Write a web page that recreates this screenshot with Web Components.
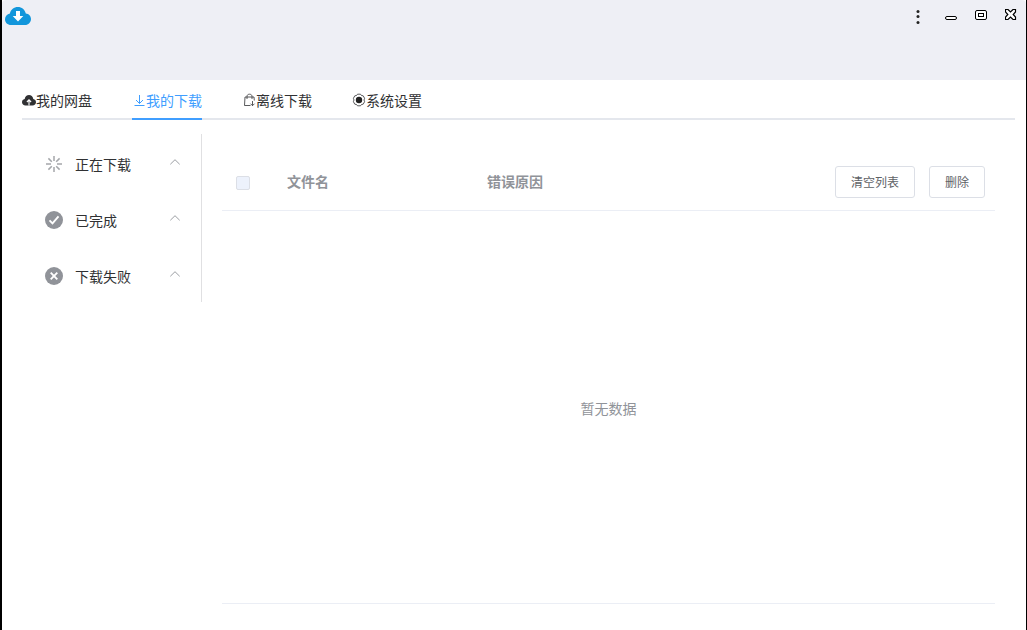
<!DOCTYPE html>
<html lang="zh-CN">
<head>
<meta charset="utf-8">
<title>我的下载</title>
<style>
html,body{margin:0;background:#000}
body{font:14px/20px "Noto Sans CJK SC",sans-serif;color:#303133}
</style>
</head>
<body>
<app-window></app-window>
<script>
const icons = {
  logo:'<svg viewBox="0 0 26 20"><path fill="#1296db" d="M6.200 19C2.500 19 0 16.500 0 13.200c0-3 2.100-5.300 4.900-5.800C5.800 3.500 9 1 12.800 1c4 0 7.200 2.700 8 6.500C23.800 7.800 26 10 26 13c0 3.300-2.600 6-6 6z"/><path fill="#fff" d="M11 5h4v5h3.300L13 15.600 7.700 10H11z"/></svg>',
  dots:'<svg viewBox="0 0 12 16"><g fill="#222"><circle cx="6" cy="2.500" r="1.500"/><circle cx="6" cy="7.500" r="1.500"/><circle cx="6" cy="13.500" r="1.500"/></g></svg>',
  min:'<svg viewBox="0 0 12 12"><rect x=".5" y="7.500" width="11" height="3" rx="1.500" fill="#fff" stroke="#000"/></svg>',
  max:'<svg viewBox="0 0 12 12"><g fill="#fff" stroke="#000"><rect x=".5" y="1.500" width="11" height="9" rx="1.500"/><rect x="3.500" y="4.500" width="5" height="3"/></g></svg>',
  close:'<svg viewBox="0 0 12 12"><path d="M.5.500h2.500L5.500 3 8 .5h2.500V3L8.200 5.500l2.300 2.500v2.500H8L5.500 8 3 10.500H.5V8l2.300-2.500L.5 3z" fill="#fff" stroke="#000" stroke-width="1.200"/></svg>',
  cloud:'<svg viewBox="0 0 14 14"><path fill="#303133" d="M3.500 12.500C1.500 12.500 0 11 0 9.200c0-1.600 1.100-2.900 2.700-3.200C3.100 3.500 4.800 2 7 2s3.900 1.500 4.300 4C12.900 6.300 14 7.600 14 9.200c0 1.800-1.500 3.300-3.500 3.300z"/><path d="M7 12.500V7M4.900 9 7 6.800 9.100 9" fill="none" stroke="#fff" stroke-width="1.100"/></svg>',
  down:'<svg viewBox="0 0 14 14"><path d="M7.500 2v8.500M4 7l3.500 3.500L11 7M2.500 12.500h10" fill="none" stroke="currentColor"/></svg>',
  bag:'<svg viewBox="0 0 14 14"><path d="M8.500 12.500h-6l.5-8.500h9l.3 3.500M5 6V3.500C5 2 6 1.200 7.500 1.200S10 2 10 3.500V6M10.500 8v4.500M8.500 10.700l2 2 2-2" fill="none" stroke="currentColor" stroke-width=".8"/></svg>',
  gear:'<svg viewBox="0 0 14 14"><path d="M5.500 1.200h3l1 1.300 1.700.3 1.400 2.500-.6 1.700.6 1.700-1.400 2.500-1.700.3-1 1.300h-3l-1-1.300-1.700-.3-1.400-2.500L2 7l-.6-1.700 1.400-2.500 1.700-.3z" fill="none" stroke="currentColor" stroke-width=".8"/><circle cx="7" cy="7" r="3.200" fill="#222"/></svg>',
  loading:'<svg viewBox="0 0 18 18"><path d="M9 1v5M9 12v5M1 9h5M12 9h5M3.400 3.400l3.400 3.400M11.200 11.200l3.400 3.400M14.600 3.400l-3.400 3.400M6.800 11.200l-3.400 3.400" stroke="#a5a7ab" stroke-width="1.500"/></svg>',
  done:'<svg viewBox="0 0 18 18"><circle cx="9" cy="9" r="9" fill="#909399"/><path d="m4.500 9.300 3 3 6-7" fill="none" stroke="#fff" stroke-width="1.900"/></svg>',
  failed:'<svg viewBox="0 0 18 18"><circle cx="9" cy="9" r="9" fill="#909399"/><path d="m5.700 5.700 6.600 6.600m0-6.600-6.600 6.600" stroke="#fff" stroke-width="1.900"/></svg>',
  up:'<svg viewBox="0 0 12 12"><path d="m1.300 8.300 4.700-4.600 4.700 4.600" fill="none" stroke="#909399" stroke-width=".9"/></svg>'
};
const define = (name, html, ready) => customElements.define(name, class extends HTMLElement {
  connectedCallback(){
    if (this.shadowRoot) return;
    const root = this.attachShadow({mode:'open'});
    root.innerHTML = '<style>*{box-sizing:border-box}button{font:inherit;color:inherit;background:none;border:0;padding:0;margin:0;cursor:pointer}</style>' + html;
    if (ready) ready(this, root);
  }
});

define('app-icon', '<style>:host{display:block;width:14px;height:14px;flex:none}svg{display:block;width:100%;height:100%}</style><span></span>',
  (el, root) => { root.querySelector('span').innerHTML = icons[el.getAttribute('name')]; root.querySelector('svg').setAttribute('aria-hidden','true'); });

define('title-bar', `<style>
:host{display:block;height:80px;background:#eeeff5;border-radius:4px 4px 0 0}
header{display:flex;justify-content:space-between;padding:6px 9px 0 3px}
.logo{width:26px;height:20px}
nav{display:flex;gap:18px;padding-top:3px}
nav app-icon{width:12px;height:12px}
button{display:block;height:12px}
.more{margin-right:3px}
.more app-icon{height:16px}
</style><header><app-icon class="logo" name="logo"></app-icon><nav aria-label="窗口">
<button class="more" aria-label="更多"><app-icon name="dots"></app-icon></button>
<button aria-label="最小化"><app-icon name="min"></app-icon></button>
<button aria-label="最大化"><app-icon name="max"></app-icon></button>
<button aria-label="关闭"><app-icon name="close"></app-icon></button></nav></header>`);

define('tab-item', `<style>
:host{display:block}
button{display:flex;align-items:center;height:40px;padding-top:2px;border-bottom:2px solid transparent;white-space:nowrap}
:host([active]) button{color:#409eff;border-color:#409eff}
</style><button role="tab"></button>`,
  (el, root) => {
    const button = root.querySelector('button');
    button.innerHTML = `<app-icon name="${el.getAttribute('icon')}"></app-icon><slot></slot>`;
    button.setAttribute('aria-selected', el.hasAttribute('active'));
  });

define('tab-bar', `<style>
:host{display:block;margin:0 11px 0 20px}
div{display:flex;gap:40px;box-shadow:inset 0 -2px #e4e7ed}
</style><div role="tablist"><slot></slot></div>`);

define('side-item', `<style>
:host{display:block}
button{display:flex;align-items:center;width:100%;height:56px;padding:4px 20px 0 23px;text-align:left}
.kind{width:18px;height:18px;margin:0 12px 0 0}
.text{flex:1}
.arrow{width:12px;height:12px;margin-bottom:4px}
</style><button aria-expanded="true"></button>`,
  (el, root) => { root.querySelector('button').innerHTML = `<app-icon class="kind" name="${el.getAttribute('icon')}"></app-icon><span class="text"><slot></slot></span><app-icon class="arrow" name="up"></app-icon>`; });

define('side-menu', `<style>:host{display:block;flex:none;width:180px;align-self:flex-start;border-right:1px solid #e0e0e2}</style><slot></slot>`);

define('plain-button', `<style>
:host{display:inline-block}
button{height:32px;padding:0 15px;border:1px solid #dcdfe6;border-radius:3px;background:#fff;color:#606266;font-size:12px;line-height:16px;vertical-align:top;white-space:nowrap}
</style><button><slot></slot></button>`);

define('file-table', `<style>
:host{display:flex;flex-direction:column;flex:1;min-width:0;border-bottom:1px solid #ebeef5}
table{width:100%;border-collapse:separate;border-spacing:0;table-layout:fixed;color:#909399}
th{height:57px;padding:0 10px;text-align:left;font-weight:700;border-bottom:1px solid #ebeef5}
.check{width:55px;padding:0 14px}
.col{width:200px;padding-bottom:2px}
.actions{display:flex;justify-content:flex-end;gap:14px;font-weight:400}
input{appearance:none;display:block;width:14px;height:14px;margin:2px 0 0;border:1px solid #dcdfe6;border-radius:2px;background:#edf2fc}
.empty{flex:1;display:flex;align-items:center;justify-content:center;color:#909399;padding-top:2px}
</style><table><thead><tr><th class="check"><input type="checkbox" disabled aria-label="全选"></th><th class="col">文件名</th><th class="col">错误原因</th><th><div class="actions"><plain-button>清空列表</plain-button><plain-button>删除</plain-button></div></th></tr></thead></table><div class="empty">暂无数据</div>`);

define('app-window', `<style>
:host{display:flex;flex-direction:column;min-height:100vh;margin:0 1px 0 2px;background:#fff}
main{flex:1;display:flex;gap:20px;padding:14px 31px 26px 20px}
file-table{margin-top:20px}
</style><title-bar></title-bar>
<tab-bar><tab-item icon="cloud">我的网盘</tab-item><tab-item icon="down" active>我的下载</tab-item><tab-item icon="bag">离线下载</tab-item><tab-item icon="gear">系统设置</tab-item></tab-bar>
<main><side-menu><side-item icon="loading">正在下载</side-item><side-item icon="done">已完成</side-item><side-item icon="failed">下载失败</side-item></side-menu><file-table></file-table></main>`);
</script>
</body>
</html>
